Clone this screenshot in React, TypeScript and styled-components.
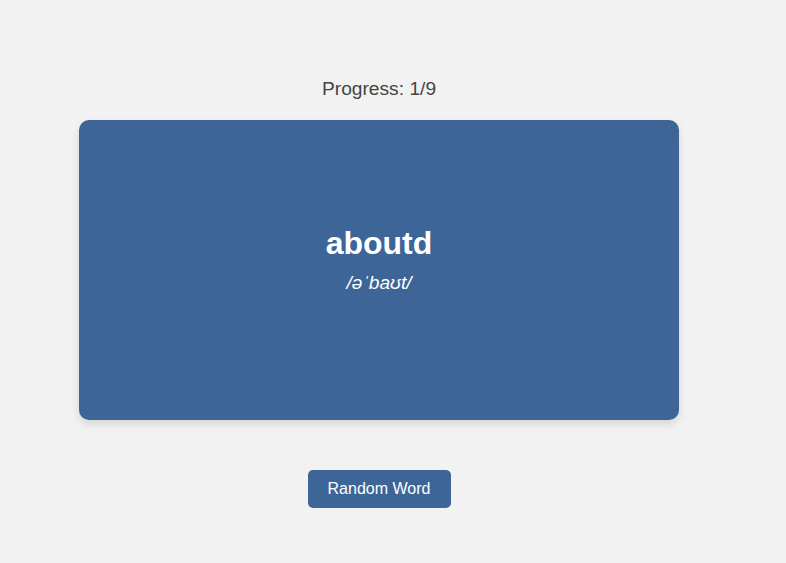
import React from "react";
import styled, { createGlobalStyle } from "styled-components";

const GlobalStyle = createGlobalStyle`
  html, body {
    margin: 0;
    padding: 0;
    background: #f2f2f2;
    font-family: "Liberation Sans", Arial, Helvetica, sans-serif;
  }
`;

const Page = styled.main`
  display: flex;
  flex-direction: column;
  align-items: center;
  width: 600px;
  padding: 78px 0 0 79px;
`;

const Progress = styled.div`
  font-size: 19.2px;
  line-height: 22px;
  color: #444444;
  margin-bottom: 20px;
`;

const Card = styled.section`
  box-sizing: border-box;
  width: 600px;
  height: 300px;
  background: #3d6597;
  border-radius: 10px;
  box-shadow: 0 4px 8px rgba(0, 0, 0, 0.12);
  display: flex;
  flex-direction: column;
  align-items: center;
  justify-content: center;
  padding-bottom: 23px;
  color: #ffffff;
`;

const Word = styled.h2`
  margin: 0 0 10px;
  font-size: 32px;
  font-weight: bold;
  line-height: 37px;
`;

const Phonetic = styled.p`
  margin: 0;
  font-size: 19.2px;
  font-style: italic;
  line-height: 21px;
`;

const Button = styled.button`
  margin-top: 50px;
  padding: 10px 20px;
  min-width: 143px;
  border: none;
  border-radius: 5px;
  background: #3d6597;
  color: #ffffff;
  font-family: inherit;
  font-size: 16px;
  line-height: 18px;
  cursor: pointer;
`;

export default function App() {
  return (
    <>
      <GlobalStyle />
      <Page>
        <Progress>Progress: 1/9</Progress>
        <Card>
          <Word>aboutd</Word>
          <Phonetic>/əˈbaʊt/</Phonetic>
        </Card>
        <Button>Random Word</Button>
      </Page>
    </>
  );
}
